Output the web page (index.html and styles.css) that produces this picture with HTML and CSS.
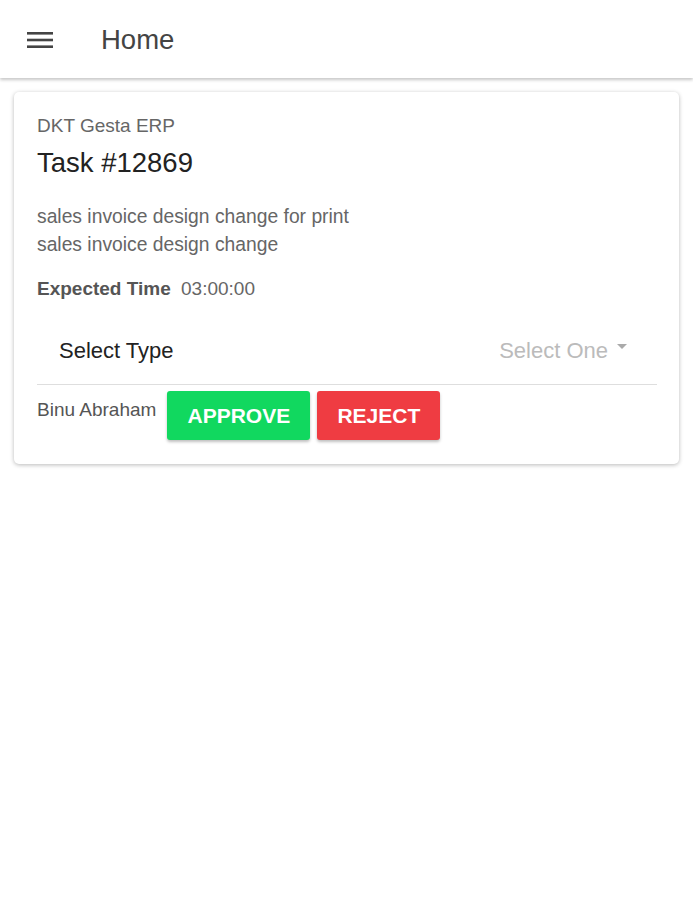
FILE: index.html
```html
<!DOCTYPE html>
<html>
<head>
<meta charset="utf-8">
<link rel="stylesheet" href="styles.css">
</head>
<body>
<header class="toolbar">
  <button class="menu-btn" aria-label="menu">
    <svg width="26" height="18" viewBox="0 0 26 18"><rect x="0" y="1" width="26" height="2.6" fill="#444"/><rect x="0" y="7.7" width="26" height="2.6" fill="#444"/><rect x="0" y="14.4" width="26" height="2.6" fill="#444"/></svg>
  </button>
  <h1 class="title">Home</h1>
</header>
<main class="content">
  <section class="card">
    <div class="card-sub">DKT Gesta ERP</div>
    <h2 class="card-title">Task #12869</h2>
    <p class="desc">sales invoice design change for print<br>sales invoice design change</p>
    <div class="expected"><span class="label">Expected Time</span> 03:00:00</div>
    <div class="select-row">
      <span class="select-label">Select Type</span>
      <span class="select-value">Select One <span class="caret"></span></span>
    </div>
    <div class="actions">
      <span class="owner">Binu Abraham</span>
      <button class="btn btn-approve">APPROVE</button>
      <button class="btn btn-reject">REJECT</button>
    </div>
  </section>
</main>
</body>
</html>
```
FILE: styles.css
```css
* { box-sizing: border-box; }
html, body { margin: 0; padding: 0; background: #fff; }
body { font-family: "Liberation Sans", Arial, sans-serif; width: 693px; }
.toolbar {
  height: 78px;
  display: flex;
  align-items: center;
  padding-left: 27px;
  background: #fff;
  box-shadow: 0 2px 3px rgba(0,0,0,0.22);
  position: relative;
}
.menu-btn { border: 0; background: none; padding: 0; margin: 0; display: flex; width: 26px; height: 18px; margin-top: 2px; }
.title { margin: 0 0 0 48px; font-size: 27.5px; font-weight: normal; color: #444; padding-top: 1px; }
.content { padding: 14px 14px; }
.card {
  border-radius: 5px;
  box-shadow: 0 1px 4px rgba(0,0,0,0.28);
  padding: 24px 22px 24px 23px;
  background: #fff;
}
.card-sub { font-size: 19px; color: #666; line-height: 20px; }
.card-title { margin: 12px 0 0; font-size: 27.5px; font-weight: normal; color: #222; line-height: 30px; }
.desc { margin: 25px 0 0; font-size: 19.3px; color: #666; line-height: 28px; }
.expected { margin-top: 19px; font-size: 19px; color: #666; line-height: 22px; }
.expected .label { font-weight: bold; color: #555; margin-right: 5px; }
.select-row {
  margin-top: 28px;
  display: flex;
  justify-content: space-between;
  align-items: center;
  padding: 0 30px 11px 22px;
  height: 57px;
  border-bottom: 1px solid #dedede;
}
.select-label { font-size: 22px; color: #222; }
.select-value { font-size: 22px; color: #bbb; display: flex; align-items: center; }
.caret { display: inline-block; width: 0; height: 0; border-left: 5px solid transparent; border-right: 5px solid transparent; border-top: 5px solid #aaa; margin-left: 9px; margin-top: -8px; }
.actions { display: flex; align-items: flex-start; margin-top: 6px; }
.owner { font-size: 19px; color: #555; margin-top: 8px; margin-right: 11px; }
.btn {
  border: 0;
  border-radius: 3px;
  height: 49px;
  font-family: "Liberation Sans", Arial, sans-serif;
  font-size: 21px;
  font-weight: bold;
  color: #fff;
  box-shadow: 0 2px 3px rgba(0,0,0,0.25);
  padding: 0;
  margin-right: 7px;
}
.btn-approve { background: #11d85f; width: 143px; }
.btn-reject { background: #ef3c42; width: 123px; }
```
